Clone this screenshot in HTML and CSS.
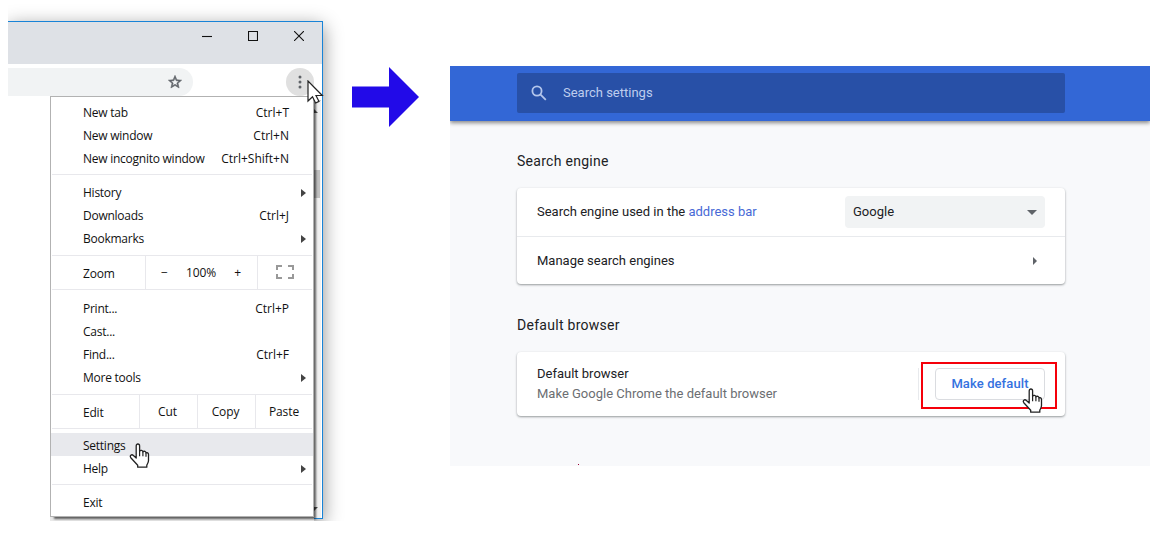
FILE: index.html
```html
<!DOCTYPE html>
<html lang="en">
<head>
<meta charset="utf-8">
<title>Chrome settings</title>
<link rel="stylesheet" href="styles.css">
</head>
<body>
<main class="guide">
  <section class="shot">
    <div class="window">
      <div class="titlebar">
        <svg width="10" height="10" viewBox="0 0 10 10"><path d="M0 5.5H10" class="ctl"/></svg>
        <svg width="10" height="10" viewBox="0 0 10 10"><path d="M.5 .5h9v9h-9z" class="ctl"/></svg>
        <svg width="10" height="10" viewBox="0 0 10 10"><path d="M0 0L10 10M10 0L0 10" class="ctl"/></svg>
      </div>
      <div class="toolbar">
        <div class="omnibox"><svg width="16" height="16" viewBox="0 0 24 24"><path fill="#5f6368" stroke="#5f6368" stroke-width=".8" d="M22 9.24l-7.19-.62L12 2 9.19 8.63 2 9.24l5.46 4.73L5.82 21 12 17.27 18.18 21l-1.63-7.03L22 9.24zM12 15.4l-3.76 2.27 1-4.28-3.32-2.88 4.38-.38L12 6.1l1.71 4.04 4.38.38-3.32 2.88 1 4.28L12 15.4z"/></svg></div>
        <div class="more"><svg width="4" height="14" viewBox="0 0 4 14" fill="#5f6368"><circle cx="2" cy="2" r="1.5"/><circle cx="2" cy="7" r="1.5"/><circle cx="2" cy="12" r="1.5"/></svg></div>
      </div>
      <div class="page"><div class="scroll"><i class="up"></i><i class="thumb"></i><i class="down"></i></div></div>
    </div>
    <div class="menu">
      <div class="group first">
        <div class="item"><span>New tab</span><kbd>Ctrl+T</kbd></div>
        <div class="item"><span>New window</span><kbd>Ctrl+N</kbd></div>
        <div class="item"><span>New incognito window</span><kbd>Ctrl+Shift+N</kbd></div>
      </div>
      <div class="group">
        <div class="item"><span>History</span><i class="sub"></i></div>
        <div class="item"><span>Downloads</span><kbd>Ctrl+J</kbd></div>
        <div class="item"><span>Bookmarks</span><i class="sub"></i></div>
      </div>
      <div class="split zoom">
        <span class="label">Zoom</span>
        <div class="cell level"><span>−</span><span class="pct">100%</span><span>+</span></div>
        <div class="cell full"><svg width="18" height="14" viewBox="0 0 18 14"><path d="M1 5V1H6M12 1H17V5M17 9V13H12M6 13H1V9" fill="none" stroke="#999" stroke-width="2"/></svg></div>
      </div>
      <div class="group tools">
        <div class="item"><span>Print...</span><kbd>Ctrl+P</kbd></div>
        <div class="item"><span>Cast...</span></div>
        <div class="item"><span>Find...</span><kbd>Ctrl+F</kbd></div>
        <div class="item"><span>More tools</span><i class="sub"></i></div>
      </div>
      <div class="split edit">
        <span class="label">Edit</span>
        <div class="cell">Cut</div><div class="cell">Copy</div><div class="cell">Paste</div>
      </div>
      <div class="group prefs">
        <div class="item active"><span>Settings</span></div>
        <div class="item"><span>Help</span><i class="sub"></i></div>
      </div>
      <div class="group last">
        <div class="item"><span>Exit</span></div>
      </div>
    </div>
    <svg class="pointer" width="17" height="24" viewBox="0 0 17 24"><path d="M1 1V21L5.5 16.8L8.6 23L12 21.4L9 15.5H15.3Z" fill="#fff" stroke="#222" stroke-width="1.2"/></svg>
    <svg class="hand hand-menu" width="21" height="26" viewBox="0 0 21 26"><use href="#hand"/></svg>
  </section>

  <svg class="arrow" width="67" height="60" viewBox="0 0 67 60"><path d="M0 19.5H37V0L67 30L37 60V40.5H0Z" fill="#220ae8"/></svg>

  <section class="settings">
    <header class="bar">
      <div class="search">
        <svg width="16" height="16" viewBox="0 0 16 16" fill="none" stroke="#b4c6ec" stroke-width="1.8"><circle cx="6" cy="6" r="4.6"/><path d="M9.3 9.3L14.8 14.8"/></svg>
        <span>Search settings</span>
      </div>
    </header>
    <div class="content">
      <h2>Search engine</h2>
      <div class="card">
        <div class="row"><span class="engine">Search engine used in the <a>address bar</a></span><div class="select"><span>Google</span><i class="caret"></i></div></div>
        <div class="row manage"><span>Manage search engines</span><i class="next"></i></div>
      </div>
      <h2>Default browser</h2>
      <div class="card default">
        <div class="desc"><span>Default browser</span><span class="muted">Make Google Chrome the default browser</span></div>
        <div class="action"><div class="callout"><button>Make default</button></div></div>
      </div>
      <i class="speck"></i>
    </div>
    <svg class="hand hand-button" width="21" height="26" viewBox="0 0 21 26"><g id="hand"><path d="M7.2 15V3C7.2 .3 10.6 .3 10.6 3V8.2C11.6 6.8 13.7 7.4 13.9 8.8C15.1 7.7 16.8 8.4 17 9.9C18.2 9.2 19.5 10 19.5 11.5V17.5C19.5 19.7 18.2 21 17.8 22.2V24.2H8.7V22.3L1.8 14.7C.4 12.7 2.6 10.9 4.4 12.4Z" fill="#fff" stroke="#222" stroke-width="1.3" stroke-linejoin="round"/><path d="M10.6 8V13.3M13.9 9V13.3M17 10V13.8" fill="none" stroke="#222" stroke-width="1.2"/></g></svg>
  </section>
</main>
</body>
</html>
```
FILE: styles.css
```css
* { box-sizing: border-box; }
body { margin: 0; background: #fff; }
svg { display: block; flex: none; }
.guide { display: flex; align-items: flex-start; width: 1162px; height: 534px; padding-left: 8px; overflow: hidden; }

.shot { position: relative; width: 344px; height: 521px; padding-top: 21px; overflow: hidden; flex: none; font: 12px/23px "Open Sans", "Noto Sans", sans-serif; color: #111; }
.shot::after { content: ""; position: absolute; left: 0; bottom: 0; width: 42px; height: 6px; background: #fff; }
.window { display: flex; flex-direction: column; width: 315px; height: 498px; border: solid #1883d7; border-width: 1px 1px 1px 0; background: #fff; box-shadow: 0 5px 18px rgba(0,0,0,.45); }
.titlebar { display: flex; justify-content: flex-end; gap: 36px; height: 42px; padding: 9px 18px 0 0; background: #dee1e6; }
.ctl { fill: none; stroke: #111; stroke-width: 1.1; }
.toolbar { display: flex; justify-content: space-between; height: 36px; padding: 4px 8px 4px 0; }
.omnibox { display: flex; align-items: center; justify-content: flex-end; width: 185px; height: 28px; padding-right: 10px; border-radius: 0 14px 14px 0; background: #f1f3f4; }
.more { display: flex; align-items: center; justify-content: center; width: 28px; height: 28px; border-radius: 50%; background: #e0e0e0; }
.page { display: flex; justify-content: flex-end; flex: 1; }
.scroll { display: flex; flex-direction: column; align-items: center; width: 15px; margin-right: 1px; border-top: 1px solid #ccc; background: #f1f1f1; }
.up { margin-top: 8px; border: solid transparent; border-width: 0 4px 4px; border-bottom-color: #505050; }
.thumb { width: 13px; height: 28px; margin: 57px 0 auto; background: #c1c1c1; }
.down { margin-bottom: 7px; border: solid transparent; border-width: 4px 4px 0; border-top-color: #505050; }

.menu { position: absolute; left: 42px; top: 96px; display: flex; flex-direction: column; width: 264px; height: 421px; border: 1px solid #b2b2b2; background: #fff; box-shadow: 0 4px 0 #e9e9e9, 3px 3px 2px -1px rgba(0,0,0,.6); }
.menu { box-shadow: 3px 3px 2px -1px rgba(0,0,0,.6), 0 4px 0 #e9e9e9; }
.group { padding: 6px 0 5px; }
.group.first { padding: 4px 0; }
.group.tools { padding-top: 7px; }
.group.prefs { padding-top: 4px; }
.group.last { padding-bottom: 2px; }
.group:not(.first):not(.tools):not(.prefs), .split { background-image: linear-gradient(#e8e8ec, #e8e8ec); background-size: calc(100% - 2px) 1px; background-position: 1px 0; background-repeat: no-repeat; }
.group:not(.first):not(.tools):not(.prefs) { padding-top: 7px; }
.item { display: flex; justify-content: space-between; align-items: center; height: 23px; padding: 0 23px 0 32px; }
.item span { letter-spacing: -.25px; }
.item kbd { margin-right: 1px; font: inherit; }
.group.prefs .item { padding-top: 2px; }
.item.active { background: #e8e9ed; }
.sub { margin-right: -16px; border: solid transparent; border-width: 4px 0 4px 5px; border-left-color: #444; }
.split { display: flex; height: 35px; margin: 0 1px; padding-left: 31px; border-bottom: 1px solid #e8e8ec; background-size: 100% 1px; background-position: 0 0; line-height: 36px; }
.label { flex: 1; padding-top: 1px; letter-spacing: -.2px; }
.cell { border-left: 1px solid #e8e8ec; width: 58px; padding-right: 2px; letter-spacing: -.1px; text-align: center; }
.level { display: flex; justify-content: space-between; width: 112px; padding: 0 16px 0 15px; }
.full { display: flex; width: 55px; padding: 10px 0 0 18px; }
.edit .cell:last-child { width: 57px; padding-right: 0; }
.pointer { position: absolute; left: 299px; top: 80px; }
.hand { position: absolute; }
.hand-menu { left: 121px; top: 443px; }

.arrow { margin-top: 67px; }

.settings { position: relative; width: 700px; height: 400px; margin: 66px 0 0 31px; overflow: hidden; flex: none; background: #f8f9fb; font: 13px/20px Roboto, sans-serif; color: #202124; }
.bar { height: 55px; padding: 7px 85px 8px 67px; background: #3367d6; box-shadow: 0 2px 4px rgba(0,0,0,.45); }
.search { display: flex; align-items: center; gap: 16px; height: 40px; padding-left: 14px; border-radius: 2px; background: #2850a7; color: #becdee; }
.content { padding: 0 85px 0 67px; }
.content h2 { margin: 0; padding: 30px 0 17px; font-size: 14px; line-height: 20px; font-weight: 400; letter-spacing: .28px; }
.card { border-radius: 4px; background: #fff; box-shadow: 0 1px 2px rgba(60,64,67,.4), 0 1px 3px rgba(60,64,67,.15); }
.row { display: flex; align-items: center; justify-content: space-between; height: 48px; padding: 0 20px; }
.row.manage { height: 48px; border-top: 1px solid #e8eaed; }
.row a { color: #4769d6; }
.select { display: flex; align-items: center; justify-content: space-between; width: 200px; height: 32px; padding: 0 8px; border-radius: 4px; background: #f1f3f4; }
.caret { border: solid transparent; border-width: 5px 5px 0; border-top-color: #5f6368; }
.next { margin-right: 8px; border: solid transparent; border-width: 4px 0 4px 4px; border-left-color: #5f6368; }
.card + h2 { padding-top: 31px; padding-bottom: 17px; }
.default { display: flex; justify-content: space-between; align-items: center; height: 64px; padding: 0 8px 0 20px; }
.desc { display: flex; flex-direction: column; padding-bottom: 1px; }
.muted { color: #6b6e72; }
.action { display: flex; align-items: center; }
.action::before { content: ""; width: 1px; height: 32px; margin-right: 2px; background: #e8eaed; }
.callout { width: 136px; height: 47px; padding: 4px 10px 4px 12px; border: 2px solid #f5000a; margin-top: 2px; }
button { display: block; width: 110px; height: 32px; padding: 0; border: 1px solid #dadce0; border-radius: 4px; background: #fff; font: 500 13px/28px Roboto, sans-serif; letter-spacing: .1px; color: #3472e0; }
.hand-button { left: 572px; top: 322px; }
.speck { display: block; width: 1px; height: 1px; margin: 48px 0 0 61px; background: #903; }
```
